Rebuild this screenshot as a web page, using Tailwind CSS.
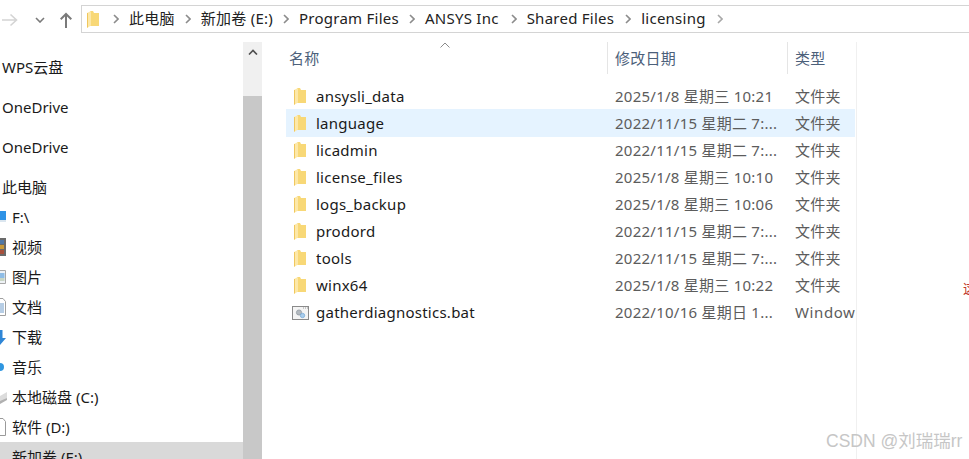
<!DOCTYPE html>
<html lang="zh-CN">
<head>
  <meta charset="UTF-8" />
  <title>licensing</title>
  <script src="https://cdn.jsdelivr.net/npm/@tailwindcss/browser@4"></script>
</head>
<body class="relative h-[459px] w-[969px] overflow-hidden bg-white font-['Noto_Sans','Noto_Sans_CJK_SC',sans-serif] text-[15px] text-[#1a1a1a]">
  <!-- toolbar -->
  <div class="flex h-[42px] items-start">
    <div class="flex h-[40px] w-[81px] items-center">
      <svg class="ml-[2px]" width="16" height="14" viewBox="0 0 16 14" fill="none" stroke="#d4d4d4" stroke-width="1.6"><path d="M0 7h14.500M8.500 1.500 14.500 7l-6 5.500"/></svg>
      <svg class="ml-[17px]" width="10" height="6" viewBox="0 0 10 6" fill="none" stroke="#7a7a7a" stroke-width="1.6"><path d="M1 1l4 4 4-4"/></svg>
      <svg class="ml-[15px]" width="12" height="16" viewBox="0 0 12 16" fill="none" stroke="#7a7a7a" stroke-width="2"><path d="M6 16V2M.7 7.300 6 2l5.300 5.300"/></svg>
    </div>
    <div class="mt-[5px] flex h-[28px] flex-1 items-center border-y border-l border-[#d4d4d4] pb-[2px] pl-[5px] tracking-[0.25px] text-[#222]">
      <svg class="mr-[14px] mt-[2px] shrink-0" width="12" height="17" viewBox="0 0 12 17"><path d="M3 0h3l1 2h5v13H3z" fill="#f8d877"/><path d="M0 2 4 0v14.500L0 17z" fill="#fde8a8"/><path d="M.5 2v14.500" stroke="#f0c75e"/></svg>
      <svg class="mr-[10px] mt-[2px]" width="6" height="10" viewBox="0 0 6 10" fill="none" stroke="#8c8c8c" stroke-width="1.6"><path d="M1 1l4 4-4 4"/></svg><span class="mr-[10px]">此电脑</span>
      <svg class="mr-[10px] mt-[2px]" width="6" height="10" viewBox="0 0 6 10" fill="none" stroke="#8c8c8c" stroke-width="1.6"><path d="M1 1l4 4-4 4"/></svg><span class="mr-[10px]">新加卷 (E:)</span>
      <svg class="mr-[10px] mt-[2px]" width="6" height="10" viewBox="0 0 6 10" fill="none" stroke="#8c8c8c" stroke-width="1.6"><path d="M1 1l4 4-4 4"/></svg><span class="mr-[10px]">Program Files</span>
      <svg class="mr-[10px] mt-[2px]" width="6" height="10" viewBox="0 0 6 10" fill="none" stroke="#8c8c8c" stroke-width="1.6"><path d="M1 1l4 4-4 4"/></svg><span class="mr-[12px]">ANSYS Inc</span>
      <svg class="mr-[10px] mt-[2px]" width="6" height="10" viewBox="0 0 6 10" fill="none" stroke="#8c8c8c" stroke-width="1.6"><path d="M1 1l4 4-4 4"/></svg><span class="mr-[11px]">Shared Files</span>
      <svg class="mr-[10px] mt-[2px]" width="6" height="10" viewBox="0 0 6 10" fill="none" stroke="#8c8c8c" stroke-width="1.6"><path d="M1 1l4 4-4 4"/></svg><span class="mr-[11px]">licensing</span>
      <svg class="mt-[2px]" width="6" height="10" viewBox="0 0 6 10" fill="none" stroke="#a8a8a8" stroke-width="1.6"><path d="M1 1l4 4-4 4"/></svg>
    </div>
  </div>

  <div class="flex h-[417px]">
    <!-- nav pane -->
    <div class="flex w-[243px] shrink-0 flex-col overflow-hidden">
      <div class="mt-[5px] flex h-[40px] shrink-0 items-center pl-[2px]">WPS云盘</div>
      <div class="flex h-[40px] shrink-0 items-center pl-[2px]">OneDrive</div>
      <div class="flex h-[40px] shrink-0 items-center pl-[2px]">OneDrive</div>
      <div class="mt-[5px] flex h-[30px] shrink-0 items-center pl-[2px]">此电脑</div>
      <div class="flex h-[30px] shrink-0 items-center">
        <svg class="mr-[2px]" width="10" height="12" viewBox="0 0 10 12"><path d="M0 0h6v9H0z" fill="#2f93e6"/><path d="M0 9h6v2H0z" fill="#dbe6ef"/></svg>F:\
      </div>
      <div class="flex h-[30px] shrink-0 items-center">
        <svg class="mr-[2px]" width="10" height="18" viewBox="0 0 10 18"><path d="M0 0h6v18H0z" fill="#6a6a6a"/><path d="M0 2h4v4H0z" fill="#4f78a8"/><path d="M0 7h4v4H0z" fill="#c99a3a"/><path d="M0 12h4v4H0z" fill="#a8503c"/></svg>视频
      </div>
      <div class="flex h-[30px] shrink-0 items-center">
        <svg class="mr-[2px]" width="10" height="14" viewBox="0 0 10 14"><path d="M0 .5h5.500v13H0" fill="#eef2f6" stroke="#a8a8a8"/><path d="M0 3h4.500v5H0z" fill="#8fbde6"/><path d="M0 8h4.500v3H0z" fill="#c9d6c4"/></svg>图片
      </div>
      <div class="flex h-[30px] shrink-0 items-center">
        <svg class="mr-[2px]" width="10" height="18" viewBox="0 0 10 18"><path d="M0 .5h3l2.500 3v14H0" fill="#fff" stroke="#a0a0a0"/><path d="M0 6h4M0 8h4M0 10h4M0 12h4M0 14h4" stroke="#6f9ccb"/></svg>文档
      </div>
      <div class="flex h-[30px] shrink-0 items-center">
        <svg class="mr-[2px]" width="10" height="15" viewBox="0 0 10 15"><path d="M0 0h2.500v8H6L0 15z" fill="#2f86d6"/></svg>下载
      </div>
      <div class="flex h-[30px] shrink-0 items-center">
        <svg class="mr-[2px]" width="10" height="10" viewBox="0 0 10 10"><path d="M0 1a4 4 0 0 1 0 8z" fill="#2f96e0"/></svg>音乐
      </div>
      <div class="flex h-[30px] shrink-0 items-center">
        <svg class="mr-[2px] mt-[4px]" width="10" height="16" viewBox="0 0 10 16"><path d="M0 5 7 1v6l-7 5z" fill="#dcdcdc"/><path d="M0 10 7 7v2l-7 4z" fill="#b0b0b0"/></svg>本地磁盘 (C:)
      </div>
      <div class="flex h-[30px] shrink-0 items-center">
        <svg class="mr-[2px]" width="10" height="18" viewBox="0 0 10 18"><path d="M0 .5h3l2.500 3v14H0" fill="#fff" stroke="#9a9a9a"/></svg>软件 (D:)
      </div>
      <div class="flex h-[30px] shrink-0 items-center bg-[#d9d9d9] pl-[12px]">新加卷 (E:)</div>
    </div>

    <!-- nav scrollbar -->
    <div class="flex w-[19px] shrink-0 flex-col bg-[#f0f0f0]">
      <div class="flex h-[54px] justify-center pt-[7px]">
        <svg width="10" height="6" viewBox="0 0 10 6" fill="none" stroke="#505050" stroke-width="1.6"><path d="M1 5.500 5 1.500l4 4"/></svg>
      </div>
      <div class="flex-1 bg-[#c8c8c8]"></div>
    </div>

    <!-- file list -->
    <div class="relative ml-[24px] w-[569px] shrink-0 tracking-[0.25px] text-[#5c5c5c]">
      <svg class="absolute left-[154px] top-[0px]" width="10" height="6" viewBox="0 0 10 6" fill="none" stroke="#8a8a8a"><path d="M.5 5.500 5 1l4.500 4.500"/></svg>
      <div class="flex h-[32px] items-center text-[#4c607a]">
        <div class="w-[321px] pl-[3px]">名称</div>
        <div class="h-full w-[180px] border-l border-[#e5e5e5] pl-[7px] leading-[32px]">修改日期</div>
        <div class="h-full flex-1 border-l border-[#e5e5e5] pl-[7px] leading-[32px]">类型</div>
      </div>
      <div class="mt-[9px] flex flex-col">
        <div class="flex h-[27px] items-center"><div class="flex w-[329px] items-center pl-[8px] text-[#1a1a1a]"><svg class="mr-[10px]" width="12" height="17" viewBox="0 0 12 17"><path d="M3 0h3l1 2h5v13H3z" fill="#f8d877"/><path d="M0 2 4 0v14.500L0 17z" fill="#fde8a8"/><path d="M.5 2v14.500" stroke="#f0c75e"/></svg>ansysli_data</div><div class="w-[180px] whitespace-nowrap">2025/1/8 星期三 10:21</div><div>文件夹</div></div>
        <div class="mt-[-1px] flex h-[28px] items-center bg-[#e5f3ff]"><div class="flex w-[329px] items-center pl-[8px] text-[#1a1a1a]"><svg class="mr-[10px]" width="12" height="17" viewBox="0 0 12 17"><path d="M3 0h3l1 2h5v13H3z" fill="#f8d877"/><path d="M0 2 4 0v14.500L0 17z" fill="#fde8a8"/><path d="M.5 2v14.500" stroke="#f0c75e"/></svg>language</div><div class="w-[180px] whitespace-nowrap">2022/11/15 星期二 7:...</div><div>文件夹</div></div>
        <div class="flex h-[27px] items-center"><div class="flex w-[329px] items-center pl-[8px] text-[#1a1a1a]"><svg class="mr-[10px]" width="12" height="17" viewBox="0 0 12 17"><path d="M3 0h3l1 2h5v13H3z" fill="#f8d877"/><path d="M0 2 4 0v14.500L0 17z" fill="#fde8a8"/><path d="M.5 2v14.500" stroke="#f0c75e"/></svg>licadmin</div><div class="w-[180px] whitespace-nowrap">2022/11/15 星期二 7:...</div><div>文件夹</div></div>
        <div class="flex h-[27px] items-center"><div class="flex w-[329px] items-center pl-[8px] text-[#1a1a1a]"><svg class="mr-[10px]" width="12" height="17" viewBox="0 0 12 17"><path d="M3 0h3l1 2h5v13H3z" fill="#f8d877"/><path d="M0 2 4 0v14.500L0 17z" fill="#fde8a8"/><path d="M.5 2v14.500" stroke="#f0c75e"/></svg>license_files</div><div class="w-[180px] whitespace-nowrap">2025/1/8 星期三 10:10</div><div>文件夹</div></div>
        <div class="flex h-[27px] items-center"><div class="flex w-[329px] items-center pl-[8px] text-[#1a1a1a]"><svg class="mr-[10px]" width="12" height="17" viewBox="0 0 12 17"><path d="M3 0h3l1 2h5v13H3z" fill="#f8d877"/><path d="M0 2 4 0v14.500L0 17z" fill="#fde8a8"/><path d="M.5 2v14.500" stroke="#f0c75e"/></svg>logs_backup</div><div class="w-[180px] whitespace-nowrap">2025/1/8 星期三 10:06</div><div>文件夹</div></div>
        <div class="flex h-[27px] items-center"><div class="flex w-[329px] items-center pl-[8px] text-[#1a1a1a]"><svg class="mr-[10px]" width="12" height="17" viewBox="0 0 12 17"><path d="M3 0h3l1 2h5v13H3z" fill="#f8d877"/><path d="M0 2 4 0v14.500L0 17z" fill="#fde8a8"/><path d="M.5 2v14.500" stroke="#f0c75e"/></svg>prodord</div><div class="w-[180px] whitespace-nowrap">2022/11/15 星期二 7:...</div><div>文件夹</div></div>
        <div class="flex h-[27px] items-center"><div class="flex w-[329px] items-center pl-[8px] text-[#1a1a1a]"><svg class="mr-[10px]" width="12" height="17" viewBox="0 0 12 17"><path d="M3 0h3l1 2h5v13H3z" fill="#f8d877"/><path d="M0 2 4 0v14.500L0 17z" fill="#fde8a8"/><path d="M.5 2v14.500" stroke="#f0c75e"/></svg>tools</div><div class="w-[180px] whitespace-nowrap">2022/11/15 星期二 7:...</div><div>文件夹</div></div>
        <div class="flex h-[27px] items-center"><div class="flex w-[329px] items-center pl-[8px] text-[#1a1a1a]"><svg class="mr-[10px]" width="12" height="17" viewBox="0 0 12 17"><path d="M3 0h3l1 2h5v13H3z" fill="#f8d877"/><path d="M0 2 4 0v14.500L0 17z" fill="#fde8a8"/><path d="M.5 2v14.500" stroke="#f0c75e"/></svg>winx64</div><div class="w-[180px] whitespace-nowrap">2025/1/8 星期三 10:22</div><div>文件夹</div></div>
        <div class="flex h-[27px] items-center"><div class="flex w-[329px] shrink-0 items-center pl-[6px] text-[#1a1a1a]"><svg class="mr-[6px]" width="18" height="14" viewBox="0 0 18 14"><rect x=".5" y=".5" width="16" height="13" fill="#f4f4f4" stroke="#8a8a8a"/><path d="M11 2h1M13 2h1M15 2h1" stroke="#9a9a9a"/><circle cx="7" cy="6.500" r="2.600" fill="#b3b9bf" stroke="#8d959c" stroke-width=".7"/><circle cx="10.500" cy="9.500" r="2.200" fill="#a9cdec" stroke="#6fa5d6" stroke-width=".7"/></svg>gatherdiagnostics.bat</div><div class="w-[180px] shrink-0 whitespace-nowrap">2022/10/16 星期日 1...</div><div class="tracking-[0.6px]">Window</div></div>
      </div>
    </div>
    <div class="ml-[1px] w-px self-stretch bg-[#f0f0f0]"></div>
  </div>

  <!-- stray glyph at the right edge and the image-host watermark -->
  <span class="absolute left-[963px] top-[279px] text-[13px] text-[#c0392b]">这</span>
  <span class="absolute left-[826px] top-[429px] font-['Liberation_Sans','Noto_Sans_CJK_SC',sans-serif] text-[17.5px] leading-[24px] text-[#c6c6c6]">CSDN @刘瑞瑞rr</span>
</body>
</html>
